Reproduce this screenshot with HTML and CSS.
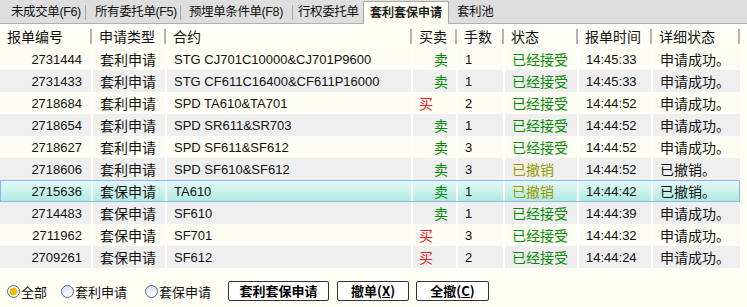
FILE: index.html
```html
<!DOCTYPE html>
<html lang="zh">
<head>
  <meta charset="UTF-8" />
  <title>套利套保申请</title>
  <link rel="stylesheet" href="styles.css">
</head>
<body>
  <div class="panel">
    <div class="tabs">
      <div class="tab t1">未成交单(F6)</div>
      <div class="tab t2">所有委托单(F5)</div>
      <div class="tab t3">预埋单条件单(F8)</div>
      <div class="tab t4">行权委托单</div>
      <div class="tab active">套利套保申请</div>
      <div class="tab t6">套利池</div>
    </div>

    <table class="grid">
      <colgroup>
        <col style="width:92px"><col style="width:74px"><col style="width:246px"><col style="width:45px">
        <col style="width:47px"><col style="width:74px"><col style="width:74px"><col style="width:88px">
      </colgroup>
      <thead>
        <tr>
          <th>报单编号</th><th>申请类型</th><th>合约</th><th>买卖</th>
          <th>手数</th><th>状态</th><th>报单时间</th><th>详细状态</th>
        </tr>
      </thead>
      <tbody>
        <tr><td class="num">2731444</td><td>套利申请</td><td>STG CJ701C10000&amp;CJ701P9600</td><td class="sell">卖</td><td>1</td><td class="ok">已经接受</td><td>14:45:33</td><td>申请成功。</td></tr>
        <tr><td class="num">2731433</td><td>套利申请</td><td>STG CF611C16400&amp;CF611P16000</td><td class="sell">卖</td><td>1</td><td class="ok">已经接受</td><td>14:45:33</td><td>申请成功。</td></tr>
        <tr><td class="num">2718684</td><td>套利申请</td><td>SPD TA610&amp;TA701</td><td class="buy">买</td><td>2</td><td class="ok">已经接受</td><td>14:44:52</td><td>申请成功。</td></tr>
        <tr><td class="num">2718654</td><td>套利申请</td><td>SPD SR611&amp;SR703</td><td class="sell">卖</td><td>1</td><td class="ok">已经接受</td><td>14:44:52</td><td>申请成功。</td></tr>
        <tr><td class="num">2718627</td><td>套利申请</td><td>SPD SF611&amp;SF612</td><td class="sell">卖</td><td>3</td><td class="ok">已经接受</td><td>14:44:52</td><td>申请成功。</td></tr>
        <tr><td class="num">2718606</td><td>套利申请</td><td>SPD SF610&amp;SF612</td><td class="sell">卖</td><td>3</td><td class="cancel">已撤销</td><td>14:44:52</td><td>已撤销。</td></tr>
        <tr class="selected"><td class="num">2715636</td><td>套保申请</td><td>TA610</td><td class="sell">卖</td><td>1</td><td class="cancel">已撤销</td><td>14:44:42</td><td>已撤销。</td></tr>
        <tr><td class="num">2714483</td><td>套保申请</td><td>SF610</td><td class="sell">卖</td><td>1</td><td class="ok">已经接受</td><td>14:44:39</td><td>申请成功。</td></tr>
        <tr><td class="num">2711962</td><td>套保申请</td><td>SF701</td><td class="buy">买</td><td>3</td><td class="ok">已经接受</td><td>14:44:32</td><td>申请成功。</td></tr>
        <tr><td class="num">2709261</td><td>套保申请</td><td>SF612</td><td class="buy">买</td><td>2</td><td class="ok">已经接受</td><td>14:44:24</td><td>申请成功。</td></tr>
      </tbody>
    </table>

    <div class="toolbar">
      <label class="radio"><span class="dot on"></span>全部</label>
      <label class="radio r2"><span class="dot"></span>套利申请</label>
      <label class="radio r3"><span class="dot"></span>套保申请</label>
      <button class="btn b1">套利套保申请</button>
      <button class="btn b2">撤单(<u>X</u>)</button>
      <button class="btn b3">全撤(<u>C</u>)</button>
    </div>
  </div>
</body>
</html>
```

FILE: styles.css
```css
body {
  margin: 0;
  background: #fefef5;
  font-family: "Liberation Sans", "Noto Sans CJK SC", sans-serif;
  color: #111;
}

.panel {
  width: 747px;
  height: 307px;
  overflow: hidden;
}

.tabs {
  display: flex;
  height: 24px;
  background: #dedede;
  border-bottom: 1px solid #b0b0b0;
  box-sizing: border-box;
  padding-left: 4px;
  align-items: flex-end;
  font-size: 12.5px;
  letter-spacing: -0.4px;
}

.tab {
  height: 22px;
  line-height: 22px;
  color: #111;
  position: relative;
  box-sizing: border-box;
  white-space: nowrap;
}

.tab::after {
  content: "";
  position: absolute;
  right: 0;
  top: 4px;
  height: 15px;
  border-right: 1px solid #a8a8a8;
}

.t1 { width: 82px; padding-left: 7px; }
.t2 { width: 95px; padding-left: 9px; }
.t3 { width: 112px; padding-left: 8px; }
.t4 { width: 70px; padding-left: 5px; }
.t6 { padding-left: 8px; }
.t4::after,
.t6::after,
.tab.active::after { display: none; }

.tab.active {
  width: 86px;
  background: #fefef5;
  border: 1px solid #a8a8a8;
  border-bottom: none;
  height: 23px;
  margin-bottom: -1px;
  padding-left: 6px;
  letter-spacing: 0;
  font-size: 12px;
  -webkit-text-stroke: 0.3px #000;
}

.grid {
  table-layout: fixed;
  width: 740px;
  border-collapse: collapse;
  font-size: 13px;
}

.grid th {
  height: 24px;
  font-weight: normal;
  font-size: 14px;
  text-align: left;
  padding: 0 0 0 7px;
  position: relative;
  white-space: nowrap;
}

.grid th::after {
  content: "";
  position: absolute;
  right: 0;
  top: 5px;
  height: 15px;
  border-right: 2px solid #b4b4b4;
}

.grid td {
  height: 22px;
  padding: 0 0 0 7px;
  border-right: 2px solid #fff;
  white-space: nowrap;
  overflow: hidden;
}

.grid td:last-child { border-right: none; }

.grid tbody tr:nth-child(odd) { background: #fdfdf3; }
.grid tbody tr:nth-child(even) { background: #efefef; }

.grid td.num {
  text-align: right;
  padding: 0 9px 0 0;
}

.grid td:nth-child(2),
.grid td:nth-child(6),
.grid td:nth-child(8) { font-size: 14px; }

.grid td.sell {
  color: #0a8a0a;
  padding-left: 21px;
  font-size: 14px;
}

.grid td.buy {
  color: #e02020;
  padding-left: 6px;
  font-size: 14px;
}

.grid td.ok { color: #0a8a0a; }
.grid td.cancel { color: #999900; }

.grid tbody tr.selected {
  background: linear-gradient(#e6f9f7, #aeeadf);
  outline: 1px solid #8cb6ea;
  outline-offset: -1px;
}

.grid tr.selected td { border-right-color: transparent; }

.toolbar {
  display: flex;
  align-items: center;
  height: 38px;
  padding: 8px 0 0 7px;
  box-sizing: border-box;
  font-size: 13px;
}

.radio {
  display: flex;
  align-items: center;
  font-family: "Noto Sans CJK SC", sans-serif;
  font-size: 13px;
}

.r2 { margin-left: 14px; }
.r3 { margin-left: 18px; }

.dot {
  width: 11px;
  height: 11px;
  border-radius: 50%;
  border: 1px solid #4a6b95;
  background: linear-gradient(#d8e0ea, #fff);
  margin-right: 1px;
  box-sizing: content-box;
}

.dot.on {
  background: radial-gradient(circle, #f2c400 0, #e8b800 45%, #fff 55%);
}

.btn {
  height: 20px;
  padding: 0;
  background: #fff;
  border: 1px solid #333;
  border-radius: 2px;
  font-family: "Noto Sans CJK SC", sans-serif;
  font-weight: bold;
  font-size: 13px;
  color: #000;
  line-height: 18px;
}

.btn u { text-decoration: underline; }

.b1 { width: 101px; margin-left: 17px; }
.b2 { width: 72px; margin-left: 8px; }
.b3 { width: 73px; margin-left: 7px; }
```
